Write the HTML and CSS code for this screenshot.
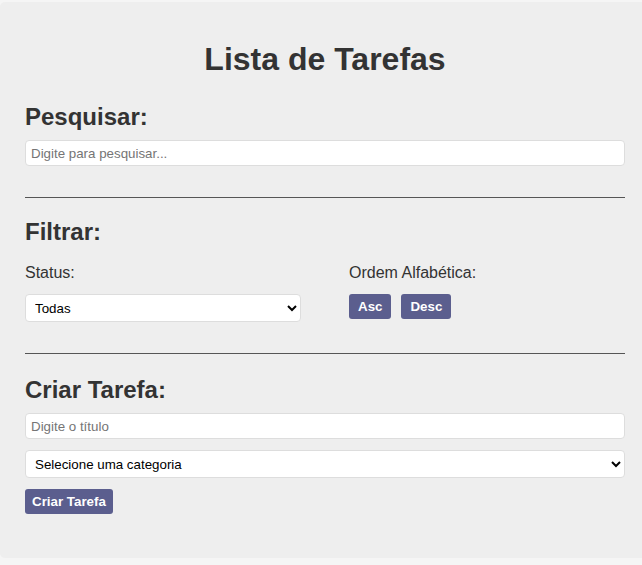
FILE: index.html
```html
<!DOCTYPE html>
<html lang="pt-BR">
<head>
<meta charset="utf-8">
<title>Lista de Tarefas</title>
<link rel="stylesheet" href="styles.css">
</head>
<body>
<div class="container">
  <h1 class="title">Lista de Tarefas</h1>

  <section class="search">
    <h2 class="section-title">Pesquisar:</h2>
    <input class="text-input" type="text" placeholder="Digite para pesquisar...">
  </section>

  <hr class="divider">

  <section class="filter">
    <h2 class="section-title">Filtrar:</h2>
    <div class="filter-row">
      <div class="filter-col">
        <label class="field-label">Status:</label>
        <select class="select-input">
          <option>Todas</option>
          <option>Completas</option>
          <option>Incompletas</option>
        </select>
      </div>
      <div class="filter-col">
        <label class="field-label">Ordem Alfabética:</label>
        <div class="btn-group">
          <button class="btn btn-sort">Asc</button>
          <button class="btn btn-sort">Desc</button>
        </div>
      </div>
    </div>
  </section>

  <hr class="divider">

  <section class="create">
    <h2 class="section-title">Criar Tarefa:</h2>
    <input class="text-input" type="text" placeholder="Digite o título">
    <select class="select-input select-wide">
      <option>Selecione uma categoria</option>
      <option>Trabalho</option>
      <option>Pessoal</option>
      <option>Estudos</option>
    </select>
    <button class="btn btn-create">Criar Tarefa</button>
  </section>
</div>
</body>
</html>
```

FILE: styles.css
```css
html, body {
  overflow: hidden;
}

body {
  margin: 0;
  padding: 2px 0 8px;
  background: #f5f5f5;
  font-family: "Liberation Sans", Arial, sans-serif;
  color: #333;
}

.container {
  width: 600px;
  padding: 20px 25px 44px;
  background: #eeeeee;
  border-radius: 5px;
}

.title {
  margin: 19px 0 0;
  font-size: 32px;
  line-height: 37px;
  font-weight: bold;
  text-align: center;
}

.section-title {
  margin: 0 0 9px;
  font-size: 24px;
  line-height: 28px;
  font-weight: bold;
}

.search {
  margin-top: 25px;
}

.text-input {
  display: block;
  width: 100%;
  height: 26px;
  box-sizing: border-box;
  padding: 0 5px;
  border: 1px solid #dddddd;
  border-radius: 4px;
  background: #fff;
  font-family: "Liberation Sans", Arial, sans-serif;
  font-size: 13.333px;
  color: #333;
}

.text-input::placeholder {
  color: #757575;
}

.divider {
  height: 0;
  margin: 31px 0 20px;
  border: 0;
  border-top: 1px solid #555;
}

.filter-row {
  display: grid;
  grid-template-columns: 1fr 1fr;
  column-gap: 48px;
  margin-top: 18px;
}

.filter-col {
  display: flex;
  flex-direction: column;
  align-items: flex-start;
}

.field-label {
  display: block;
  margin-bottom: 12px;
  font-size: 16px;
  line-height: 18px;
}

.select-input {
  display: block;
  width: 100%;
  height: 28px;
  box-sizing: border-box;
  padding: 0 5px;
  border: 1px solid #dddddd;
  border-radius: 4px;
  background: #fff;
  font-family: "Liberation Sans", Arial, sans-serif;
  font-size: 13.333px;
  color: #000;
}

.create {
  padding-top: 2px;
}

.create .text-input {
  margin-bottom: 11px;
}

.select-wide {
  margin-bottom: 11px;
}

.btn-group {
  display: flex;
  gap: 10px;
}

.btn {
  display: block;
  height: 25px;
  border: 0;
  border-radius: 3px;
  background: #5b5e8e;
  color: #fff;
  font-family: "Liberation Sans", Arial, sans-serif;
  font-size: 13.333px;
  font-weight: bold;
  line-height: 15px;
}

.btn-sort {
  padding: 0 9px;
}

.btn-create {
  padding: 0 7px;
}
```
